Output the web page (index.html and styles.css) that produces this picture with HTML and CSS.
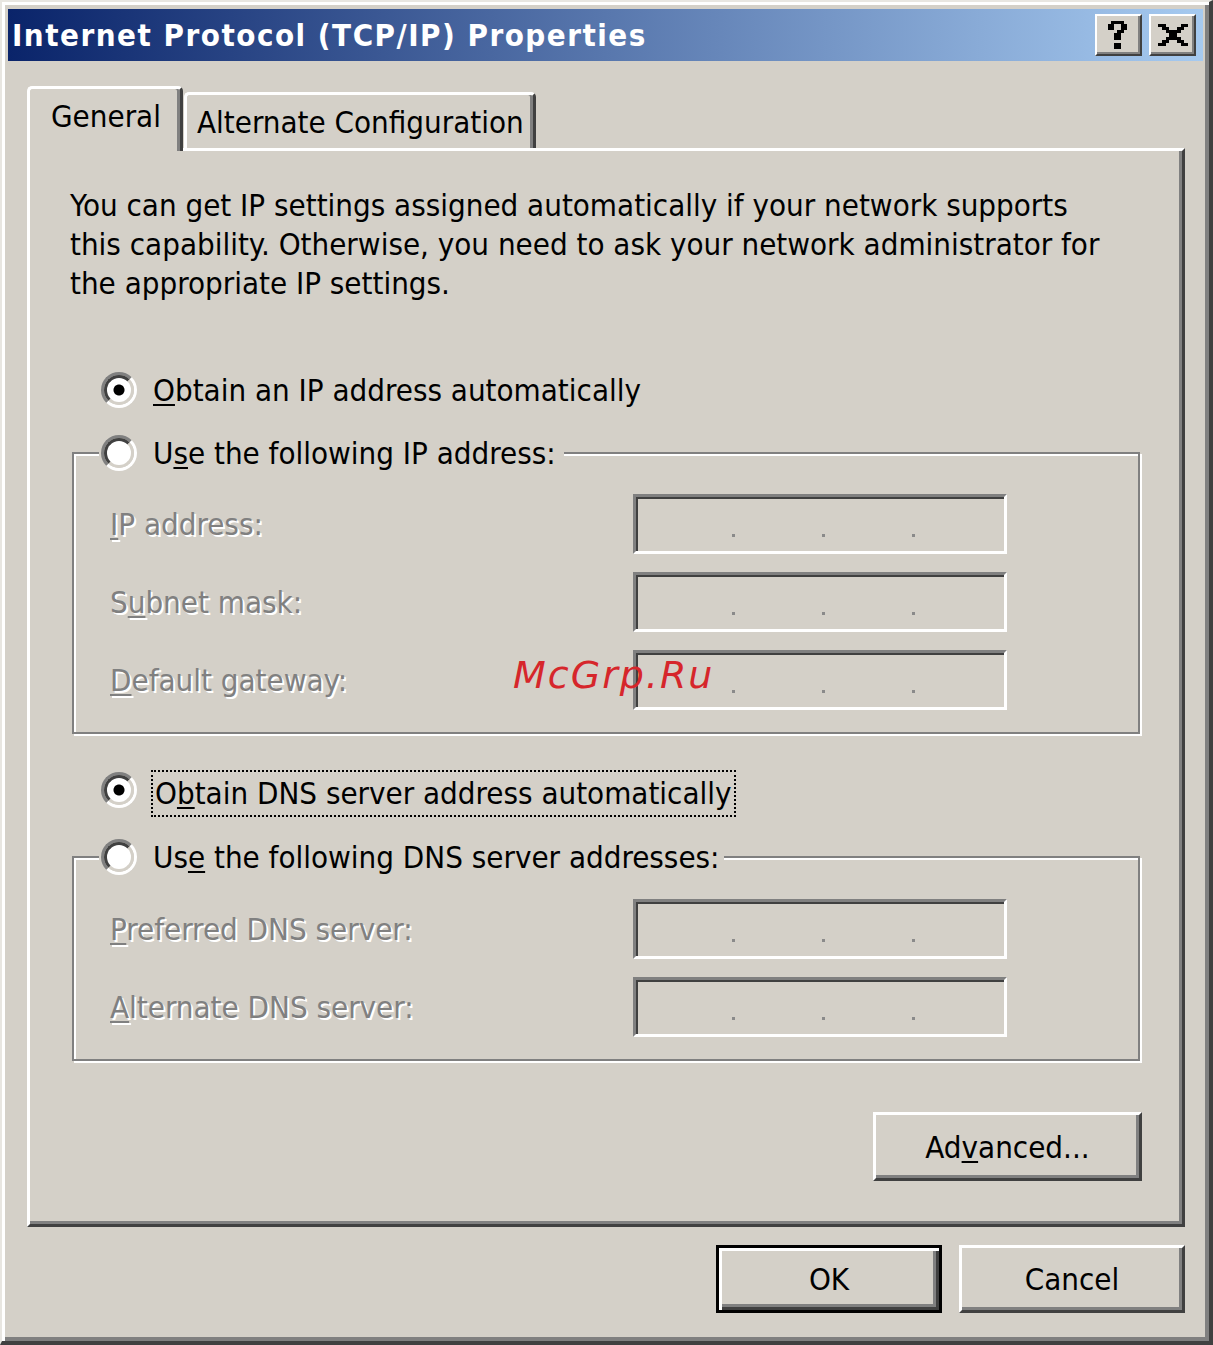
FILE: index.html
```html
<!DOCTYPE html>
<html>
<head>
<meta charset="utf-8">
<title>Internet Protocol (TCP/IP) Properties</title>
<link rel="stylesheet" href="styles.css">
</head>
<body>
<div class="window">
  <div class="titlebar">
    <span class="title">Internet Protocol (TCP/IP) Properties</span>
    <div class="capbtns">
      <div class="capbtn">
        <svg width="22" height="28" viewBox="0 0 7 9" preserveAspectRatio="none" shape-rendering="crispEdges">
          <rect x="1" y="0" width="4" height="1" fill="#000"/>
          <rect x="0" y="1" width="2" height="2" fill="#000"/>
          <rect x="4" y="1" width="2" height="2" fill="#000"/>
          <rect x="3" y="3" width="2" height="1" fill="#000"/>
          <rect x="2" y="4" width="2" height="2" fill="#000"/>
          <rect x="2" y="7" width="2" height="2" fill="#000"/>
        </svg>
      </div>
      <div class="capbtn">
        <svg width="30" height="22" viewBox="0 0 8 7" preserveAspectRatio="none" shape-rendering="crispEdges">
          <path d="M0 0h2v1h1v1h2v-1h1v-1h2v1h-1v1h-1v1h-1v1h1v1h1v1h1v1h-2v-1h-1v-1h-2v1h-1v1h-2v-1h1v-1h1v-1h1v-1h-1v-1h-1v-1h-1z" fill="#000"/>
        </svg>
      </div>
    </div>
  </div>

  <div class="main">
    <div class="tabs">
      <div class="tab active">General</div>
      <div class="tab inactive">Alternate Configuration</div>
    </div>
    <div class="panel">
      <p class="intro">You can get IP settings assigned automatically if your network supports<br>this capability. Otherwise, you need to ask your network administrator for<br>the appropriate IP settings.</p>

      <div class="opt">
        <span class="radio checked"></span>
        <span><u>O</u>btain an IP address automatically</span>
      </div>

      <fieldset class="group g1">
        <legend><span class="legend-in"><span class="radio"></span><span>U<u>s</u>e the following IP address:</span></span></legend>
        <div class="field">
          <span class="dis"><u>I</u>P address:</span>
          <div class="ipbox"><i></i><i></i><i></i></div>
        </div>
        <div class="field">
          <span class="dis">S<u>u</u>bnet mask:</span>
          <div class="ipbox"><i></i><i></i><i></i></div>
        </div>
        <div class="field">
          <span class="dis"><u>D</u>efault gateway:</span>
          <div class="ipbox"><i></i><i></i><i></i></div>
        </div>
      </fieldset>

      <div class="opt dns">
        <span class="radio checked"></span>
        <span class="focus">O<u>b</u>tain DNS server address automatically</span>
      </div>

      <fieldset class="group g2">
        <legend><span class="legend-in"><span class="radio"></span><span>Us<u>e</u> the following DNS server addresses:</span></span></legend>
        <div class="field">
          <span class="dis"><u>P</u>referred DNS server:</span>
          <div class="ipbox"><i></i><i></i><i></i></div>
        </div>
        <div class="field">
          <span class="dis"><u>A</u>lternate DNS server:</span>
          <div class="ipbox"><i></i><i></i><i></i></div>
        </div>
      </fieldset>

      <div class="btn adv">Ad<u>v</u>anced...</div>
    </div>

    <div class="dlg-buttons">
      <div class="btn default">OK</div>
      <div class="btn">Cancel</div>
    </div>
  </div>

  <div class="watermark">McGrp.Ru</div>
</div>
</body>
</html>
```
FILE: styles.css
```css
* { box-sizing: border-box; }

html, body {
  margin: 0;
  padding: 0;
  background: #d4d0c8;
}

body {
  width: 1213px;
  height: 1345px;
  overflow: hidden;
  font-family: "DejaVu Sans Condensed", "DejaVu Sans", sans-serif;
  font-stretch: semi-condensed;
  font-size: 31px;
  letter-spacing: 0;
  color: #000;
}

u {
  text-decoration-thickness: 2px;
  text-underline-offset: 3px;
}

.window {
  position: relative;
  width: 1213px;
  height: 1345px;
  background: #d4d0c8;
  border-style: solid;
  border-width: 2px 4px 4px 2px;
  border-color: #e8e6e1 #404040 #404040 #e8e6e1;
  box-shadow: inset 3px 3px #fff, inset -4px -4px #808080;
  padding: 7px 6px 0 6px;
}

/* Title bar */
.titlebar {
  height: 52px;
  display: flex;
  align-items: center;
  padding: 0 7px 0 4px;
  background: linear-gradient(to right, #0a246a, #a6caf0);
}

.title {
  flex: 1;
  color: #fff;
  font-weight: bold;
  font-size: 31px;
  letter-spacing: 1.5px;
  white-space: nowrap;
}

.capbtns {
  display: flex;
  gap: 7px;
}

.capbtn {
  width: 47px;
  height: 42px;
  background: #d4d0c8;
  border: 2px solid;
  border-color: #fff #404040 #404040 #fff;
  box-shadow: inset -2px -2px #808080;
  display: flex;
  align-items: center;
  justify-content: center;
}

/* Main area */
.main {
  padding: 25px 18px 0 19px;
}

.tabs {
  display: flex;
  align-items: flex-end;
  height: 62px;
}

.tab {
  border: 3px solid;
  border-bottom: 0;
  border-color: #fff #404040 #fff #fff;
  box-shadow: inset -3px 0 #808080;
  border-radius: 5px 5px 0 0;
  line-height: 40px;
  white-space: nowrap;
  background: #d4d0c8;
}

.tab.active {
  width: 156px;
  height: 65px;
  margin-bottom: -3px;
  position: relative;
  z-index: 1;
  padding: 7px 0 0 21px;
}

.tab.inactive {
  width: 352px;
  height: 56px;
  margin-left: 1px;
  padding: 7px 0 0 10px;
}

.panel {
  height: 1079px;
  border: 3px solid;
  border-color: #fff #404040 #404040 #fff;
  box-shadow: inset -3px -3px #808080;
  display: flex;
  flex-direction: column;
}

.intro {
  margin: 35px 0 0 40px;
  line-height: 39px;
  white-space: nowrap;
}

.opt {
  display: flex;
  align-items: center;
  gap: 16px;
  height: 40px;
  margin: 67px 0 0 71px;
  white-space: nowrap;
}

.opt.dns {
  margin-top: 36px;
  height: 47px;
  align-items: flex-start;
  gap: 14px;
}

.opt.dns .radio {
  margin-top: 2px;
}

.focus {
  border: 2px dotted #000;
  padding: 0 2px;
  line-height: 43px;
}

/* Radio buttons */
.radio {
  flex: none;
  width: 36px;
  height: 36px;
  border-radius: 50%;
  border: 3px solid;
  border-color: #808080 #fff #fff #808080;
  display: flex;
}

.radio::before {
  content: "";
  flex: 1;
  border-radius: 50%;
  border: 3px solid;
  border-color: #404040 #d4d0c8 #d4d0c8 #404040;
  background: #fff;
}

.radio.checked::before {
  background: radial-gradient(circle, #000 0 5px, #fff 6px);
}

/* Group boxes */
.group {
  margin: 23px 42px 0;
  padding: 21px 0 22px 25px;
  border: 2px solid #808080;
  box-shadow: inset 2px 2px #fff, 2px 2px #fff;
  min-width: 0;
}

.group.g2 {
  margin-top: 20px;
  padding-top: 22px;
}

.group legend {
  padding: 0 8px 0 2px;
  background: #d4d0c8;
}

.group.g2 legend {
  padding-right: 4px;
}

.legend-in {
  display: flex;
  align-items: center;
  gap: 16px;
  height: 40px;
  white-space: nowrap;
}

.field {
  display: grid;
  grid-template-columns: 523px 374px;
  align-items: center;
  height: 60px;
  margin-left: 11px;
}

.field + .field {
  margin-top: 18px;
}

.dis {
  color: #808080;
  text-shadow: 2px 2px 0 #fff;
  white-space: nowrap;
}

.ipbox {
  height: 60px;
  border: 3px solid;
  border-color: #808080 #fff #fff #808080;
  box-shadow: inset 2px 2px #404040, inset -2px -2px #d4d0c8;
  display: flex;
  align-items: flex-end;
  padding: 0 0 14px 96px;
  gap: 87px;
}

.ipbox i {
  display: block;
  width: 3px;
  height: 3px;
  background: #8a8a8a;
}

/* Buttons */
.btn {
  height: 69px;
  border: 3px solid;
  border-color: #fff #404040 #404040 #fff;
  box-shadow: inset -3px -3px #808080;
  display: flex;
  align-items: center;
  justify-content: center;
  white-space: nowrap;
}

.btn.adv {
  width: 269px;
  align-self: flex-end;
  margin: 51px 40px 0 0;
}

.dlg-buttons {
  display: flex;
  justify-content: flex-end;
  gap: 17px;
  margin-top: 18px;
}

.dlg-buttons .btn {
  width: 226px;
  height: 68px;
}

.btn.default {
  border: 3px solid #000;
  box-shadow: inset 3px 3px #fff, inset -3px -3px #404040, inset -6px -6px #808080;
}

/* Watermark overlay */
.watermark {
  position: absolute;
  left: 511px;
  top: 654px;
  font-family: "DejaVu Sans", sans-serif;
  font-stretch: normal;
  font-style: italic;
  font-size: 38px;
  line-height: 38px;
  letter-spacing: 2px;
  color: #d6262b;
  z-index: 2;
}
```
